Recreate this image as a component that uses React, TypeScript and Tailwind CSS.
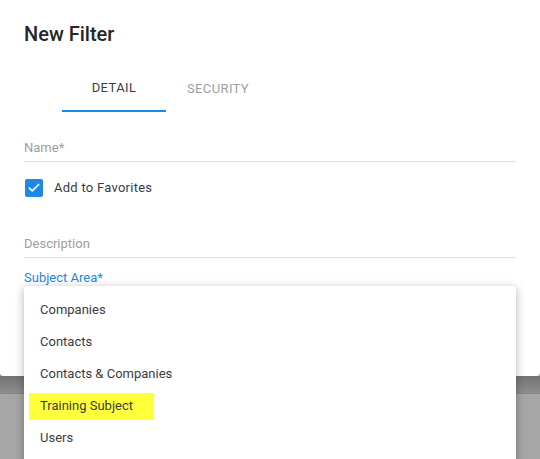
import { Check } from "lucide-react";

const subjects = ["Companies", "Contacts", "Contacts & Companies", "Training Subject", "Users"];

function Field({ label, className }: { label: string; className: string }) {
  return (
    <div className={`mr-[24px] border-b border-[#e0e0e0] pb-[5px] text-[13px] leading-[16px] text-[#9e9e9e] ${className}`}>
      {label}
    </div>
  );
}

export default function App() {
  return (
    <div
      className="relative h-[459px] w-[540px] overflow-hidden bg-[#a6a6a6]"
      style={{ fontFamily: "Roboto, 'Liberation Sans', sans-serif" }}
    >
      {/* dialog */}
      <div className="h-[376px] rounded-b-[4px] bg-white pl-[24px]">
        <h2 className="pt-[22px] text-[20px] font-medium leading-[24px] text-[#262626]">New Filter</h2>

        <div className="ml-[38px] mt-[18px] flex h-[48px] text-[13px] uppercase tracking-[0.03em]">
          <div className="flex w-[104px] items-center justify-center border-b-2 border-[#1e88e5] pt-[2px] text-[#3c3c3c]">
            Detail
          </div>
          <div className="flex w-[104px] items-center justify-center pt-[2px] text-[#9e9e9e]">Security</div>
        </div>

        <Field label="Name*" className="mt-[28px]" />

        <div className="mt-[17px] flex h-[18px] items-center">
          <span className="ml-px flex h-[18px] w-[18px] items-center justify-center rounded-[2px] bg-[#1e88e5]">
            <Check size={14} strokeWidth={3} color="white" />
          </span>
          <span className="ml-[11px] text-[13px] tracking-[0.02em] text-[#3c3c3c]">Add to Favorites</span>
        </div>

        <Field label="Description" className="mt-[39px]" />

        <div className="mt-[12px] text-[13px] leading-[16px] text-[#1e88e5]">Subject Area*</div>
      </div>

      {/* dimmed page below */}
      <div className="h-[18px] border-b border-[#858585] bg-gradient-to-b from-[#737373] to-[#8e8e8e]" />

      {/* dropdown */}
      <div className="absolute left-[24px] top-[286px] h-[200px] w-[492px] rounded-[2px] bg-white pt-[8px] shadow-[0_2px_10px_rgba(0,0,0,0.3)]">
        {subjects.map((s) =>
          s === "Training Subject" ? (
            <div key={s} className="flex h-[32px] items-center">
              <span className="ml-[5px] flex h-[27px] w-[125px] items-center bg-[#ffff3b] pl-[11px] text-[13px] text-[#3c3c3c]">
                {s}
              </span>
            </div>
          ) : (
            <div key={s} className="flex h-[32px] items-center pl-[16px] text-[13px] text-[#3c3c3c]">
              {s}
            </div>
          )
        )}
      </div>
    </div>
  );
}
